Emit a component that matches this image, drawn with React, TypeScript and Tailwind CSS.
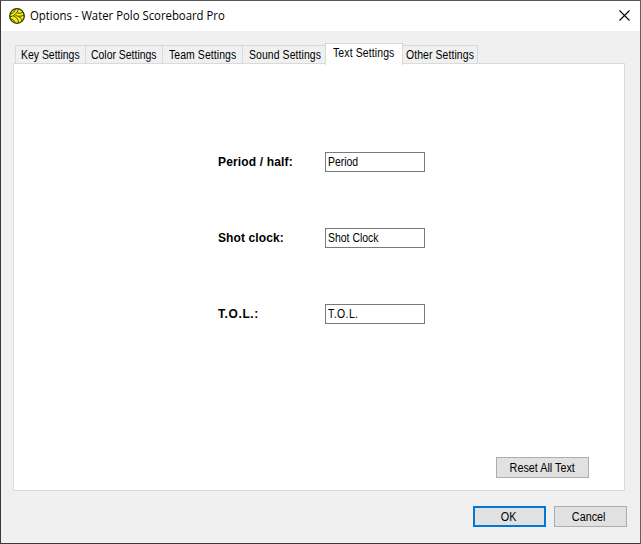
import React from 'react';

const tabs = [
  { name: 'Key Settings', box: 'w-[71px] pl-[5px]' },
  { name: 'Color Settings', box: 'w-[77px] pl-[5px]' },
  { name: 'Team Settings', box: 'w-[80px] pl-[6px] tracking-[0.1px]' },
  { name: 'Sound Settings', box: 'w-[83px] pl-[6px] tracking-[0.1px]' },
  { name: 'Text Settings', box: 'w-[78px] pl-[7px] tracking-[0.15px]', active: true },
  { name: 'Other Settings', box: 'w-[75px] pl-[3px] tracking-[0.1px]' },
];

const fields = [
  { label: 'Period / half:', value: 'Period', labelStyle: 'tracking-[0.15px]', valueStyle: '' },
  { label: 'Shot clock:', value: 'Shot Clock', labelStyle: 'tracking-[0.1px]', valueStyle: '' },
  { label: 'T.O.L.:', value: 'T.O.L.', labelStyle: 'tracking-[0.6px]', valueStyle: 'tracking-[0.5px]' },
];

function Caption({ children, wide = false }: { children: React.ReactNode; wide?: boolean }) {
  return (
    <span className={`inline-block whitespace-nowrap ${wide ? 'origin-center scale-x-[0.9]' : 'origin-left scale-x-[0.87]'}`}>
      {children}
    </span>
  );
}

function BallIcon() {
  return (
    <svg className="h-4 w-4 shrink-0" viewBox="0 0 16 16" fill="none">
      <circle cx="8" cy="8" r="7.3" fill="#f5ee10" stroke="#303010" strokeWidth="1.3" />
      <g stroke="#49470a" strokeWidth="1">
        <path d="M1 9C5 8 8.5 5 9.5 1.2" />
        <path d="M1.8 5.8C4.2 5.4 5.8 3.6 6.4 1" />
        <path d="M8.4 5C10.5 5.6 12.5 5.2 14 4" />
        <path d="M6.4 7.2C9 8.8 12 8.6 15 7" />
        <path d="M1.6 11C4 11 5.6 12.6 6.2 15" />
        <path d="M4.6 8.2C7.8 9.2 9.4 11.5 9.6 14.8" />
        <path d="M9.4 8.6C11.8 9.6 12.8 10.8 12.8 13" />
      </g>
    </svg>
  );
}

export default function App() {
  return (
    <div className="flex h-[544px] w-[641px] flex-col overflow-hidden border border-[#39393b] border-t-[#59575a] border-r-[#626164] bg-[#f0f0f0] font-['Liberation_Sans',sans-serif] text-[12px] leading-[14px] text-black">
      <header className="flex h-[30px] shrink-0 items-center bg-white pl-2">
        <BallIcon />
        <h1 className="ml-[5px] origin-left scale-x-[0.945] whitespace-nowrap font-['Open_Sans',sans-serif] text-[12px] leading-4">
          Options - Water Polo Scoreboard Pro
        </h1>
        <button className="mr-[10px] mb-[2px] ml-auto" aria-label="Close">
          <svg className="h-[11px] w-[11px]" viewBox="0 0 11 11" stroke="#000" strokeWidth="1.1">
            <path d="M.5 .5 10.5 10.5M10.5 .5 .5 10.5" />
          </svg>
        </button>
      </header>

      <nav className="mt-3 ml-[14px] flex h-[21px] shrink-0 items-end">
        {tabs.map((tab, i) => (
          <button
            key={tab.name}
            className={`flex shrink-0 items-start border-t border-r border-[#d9d9d9] text-left ${tab.box} ${
              tab.active ? 'z-10 -mb-px -ml-px h-[22px] border-l bg-white pt-[2px]' : 'h-[19px] pt-[2px]'
            } ${i === 0 ? 'border-l' : ''}`}
          >
            <Caption>{tab.name}</Caption>
          </button>
        ))}
      </nav>

      <main className="-mt-px mr-[15px] ml-3 flex h-[428px] shrink-0 flex-col border border-[#dadada] bg-white">
        <div className="mt-[88px] ml-[204px] flex flex-col gap-14">
          {fields.map((f) => (
            <label key={f.label} className="flex h-5 items-center">
              <span className={`w-[107px] font-bold whitespace-nowrap ${f.labelStyle}`}>{f.label}</span>
              <span className={`flex h-5 w-[100px] items-center border border-[#7a7a7a] bg-white pl-[2px] ${f.valueStyle}`}>
                <Caption>{f.value}</Caption>
              </span>
            </label>
          ))}
        </div>
        <button className="mt-auto mr-[35px] mb-3 flex h-[21px] w-[93px] items-center justify-center self-end border border-[#adadad] bg-[#e1e1e1] pr-px">
          <Caption wide>Reset All Text</Caption>
        </button>
      </main>

      <footer className="mt-[15px] mr-[13px] flex justify-end gap-2">
        <button className="flex h-[21px] w-[73px] items-center justify-center border-2 border-[#0078d7] bg-[#e1e1e1] pr-[2px]">
          <Caption wide>OK</Caption>
        </button>
        <button className="flex h-[21px] w-[73px] items-center justify-center border border-[#adadad] bg-[#e1e1e1] pr-[3px]">
          <Caption wide>Cancel</Caption>
        </button>
      </footer>
    </div>
  );
}
